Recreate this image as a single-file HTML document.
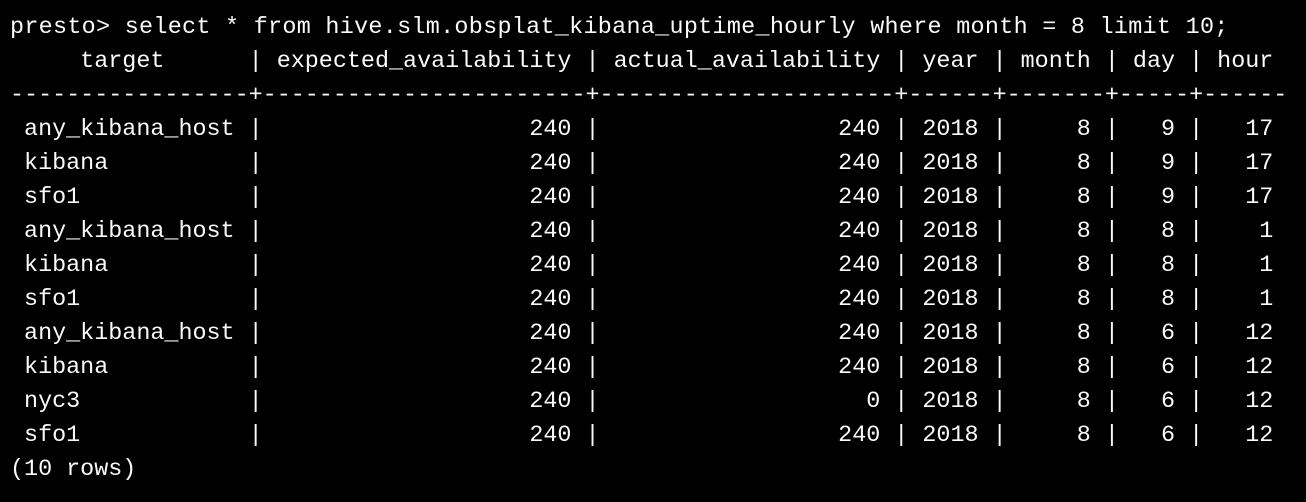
<!DOCTYPE html>
<html><head><style>
html,body{margin:0;padding:0;background:#000;width:1306px;height:502px;overflow:hidden}
pre{margin:0;position:absolute;left:10px;top:11px;font-family:"Liberation Mono",monospace;font-size:23.4px;line-height:34px;color:#fafafa;}
.l1{letter-spacing:0.3px}
</style></head><body><pre><span class="l1">presto&gt; select * from hive.slm.obsplat_kibana_uptime_hourly where month = 8 limit 10;</span>
     target      | expected_availability | actual_availability | year | month | day | hour
-----------------+-----------------------+---------------------+------+-------+-----+------
 any_kibana_host |                   240 |                 240 | 2018 |     8 |   9 |   17
 kibana          |                   240 |                 240 | 2018 |     8 |   9 |   17
 sfo1            |                   240 |                 240 | 2018 |     8 |   9 |   17
 any_kibana_host |                   240 |                 240 | 2018 |     8 |   8 |    1
 kibana          |                   240 |                 240 | 2018 |     8 |   8 |    1
 sfo1            |                   240 |                 240 | 2018 |     8 |   8 |    1
 any_kibana_host |                   240 |                 240 | 2018 |     8 |   6 |   12
 kibana          |                   240 |                 240 | 2018 |     8 |   6 |   12
 nyc3            |                   240 |                   0 | 2018 |     8 |   6 |   12
 sfo1            |                   240 |                 240 | 2018 |     8 |   6 |   12
(10 rows)</pre></body></html>
